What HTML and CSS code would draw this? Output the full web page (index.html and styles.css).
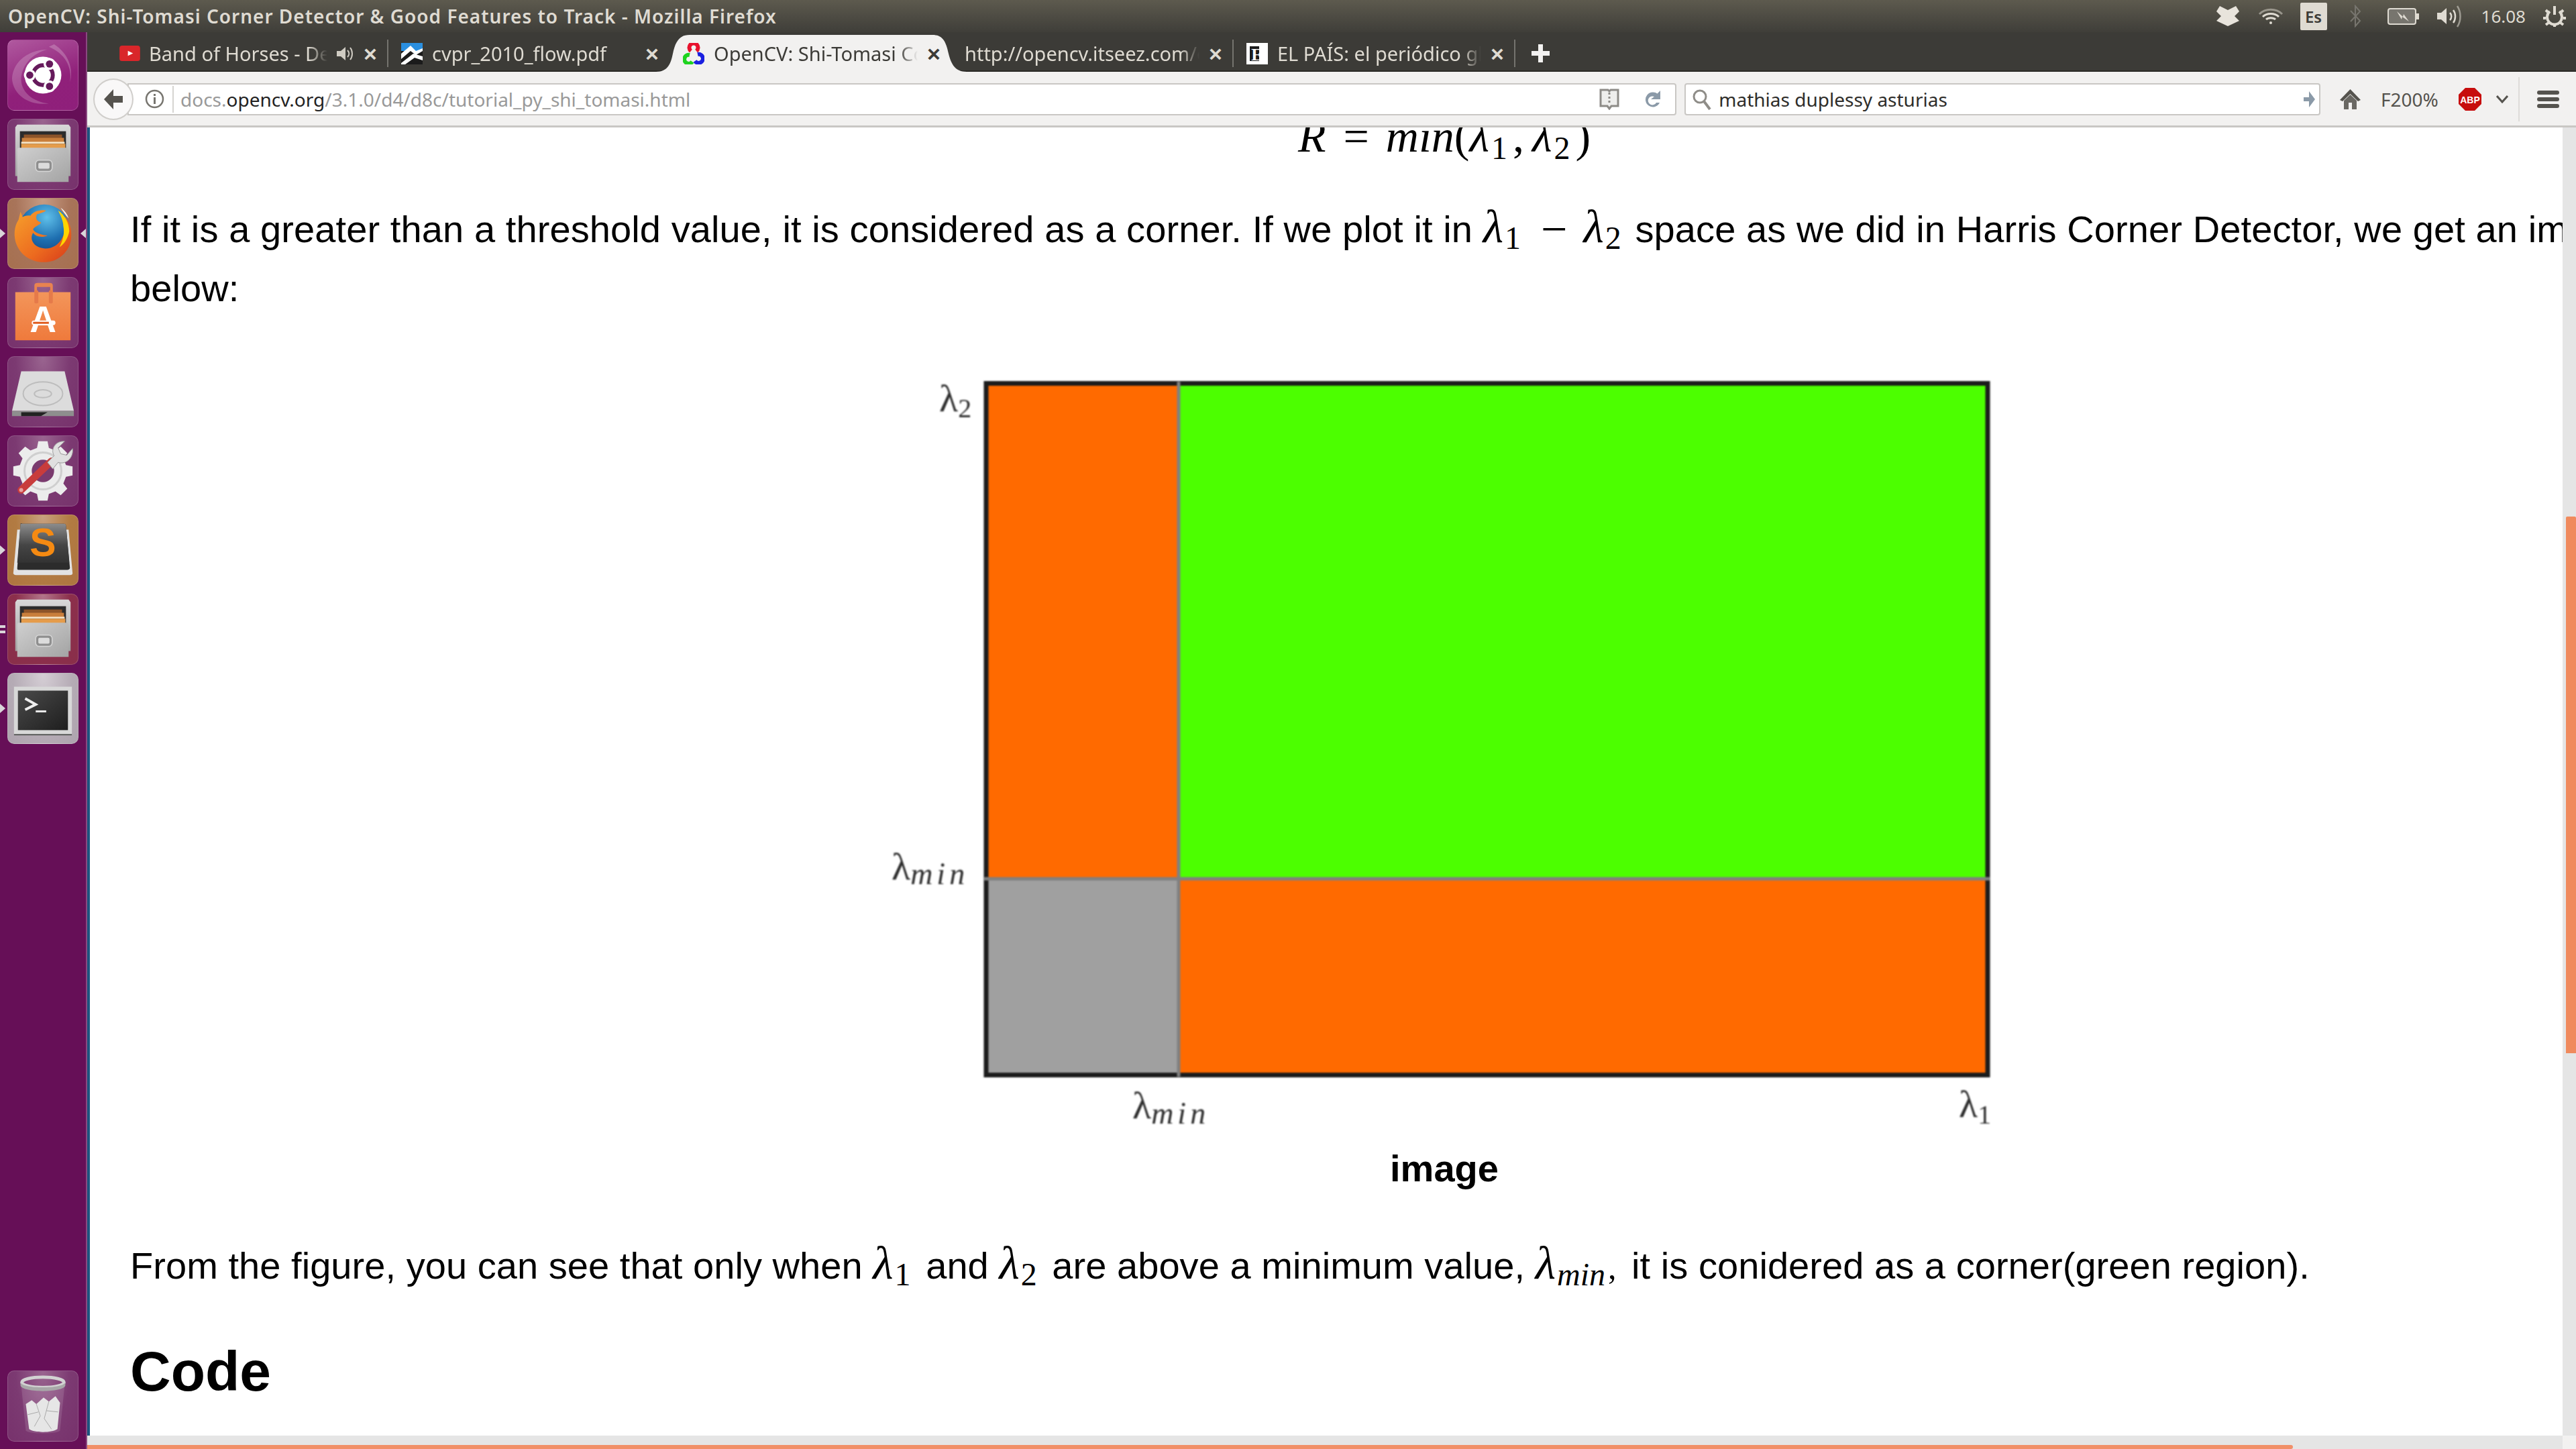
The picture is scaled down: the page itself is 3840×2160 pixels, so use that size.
FILE: index.html
```html
<!DOCTYPE html>
<html lang="en">
<head>
    <meta charset="UTF-8">
    <title>OpenCV: Shi-Tomasi Corner Detector &amp; Good Features to Track - Mozilla Firefox</title>
    <link rel="stylesheet" href="styles.css">
</head>
<body>
    <svg class="svg-defs" aria-hidden="true">
        <defs>
            <linearGradient id="steel" x1="0" y1="0" x2="0" y2="1"><stop offset="0" stop-color="#d8d8d8"/><stop offset="1" stop-color="#a2a2a2"/></linearGradient>
            <linearGradient id="drawer" x1="0" y1="0" x2="1" y2="1"><stop offset="0" stop-color="#cfcfcf"/><stop offset="1" stop-color="#a4a4a4"/></linearGradient>
            <linearGradient id="bag" x1="0" y1="0" x2="0" y2="1"><stop offset="0" stop-color="#f3955a"/><stop offset="1" stop-color="#ef7a3c"/></linearGradient>
            <linearGradient id="key" x1="0" y1="0" x2="0" y2="1"><stop offset="0" stop-color="#8c8c8c"/><stop offset=".55" stop-color="#454545"/><stop offset="1" stop-color="#333"/></linearGradient>
            <linearGradient id="screen" x1="0" y1="0" x2="1" y2="1"><stop offset="0" stop-color="#4a4a4a"/><stop offset="1" stop-color="#1e1e1e"/></linearGradient>
            <radialGradient id="globe" cx=".55" cy=".25" r=".8"><stop offset="0" stop-color="#5fc0ea"/><stop offset=".55" stop-color="#1e6fb0"/><stop offset="1" stop-color="#123f7c"/></radialGradient>
            <linearGradient id="fox" x1="0" y1="0" x2="1" y2="1"><stop offset="0" stop-color="#f7a12c"/><stop offset=".6" stop-color="#ec6a1f"/><stop offset="1" stop-color="#d6391a"/></linearGradient>
            <symbol id="cabinet" viewBox="0 0 106 106">
                <path d="M14 8H92L95 12V86H11V12Z" fill="url(#steel)"/>
                <rect x="18" y="18" width="70" height="30" fill="#2c2c2c"/>
                <rect x="24" y="23" width="58" height="6" fill="#8d5429"/>
                <rect x="21" y="28" width="64" height="7" fill="#c97f3c"/>
                <rect x="20" y="34" width="66" height="3" fill="#f4e3c6"/>
                <rect x="20" y="37" width="67" height="9" fill="#e59c4b"/>
                <path d="M15 43H90L92 46V95H14V46Z" fill="url(#drawer)"/>
                <rect x="42" y="62" width="25" height="17" rx="5" fill="#8f8f8f" stroke="#d6d6d6" stroke-width="1.5"/>
                <rect x="46" y="66" width="17" height="9" rx="2" fill="#dcdcdc"/>
            </symbol>
        </defs>
    </svg>

    <header class="panel">
        <div class="panel-title">OpenCV: Shi-Tomasi Corner Detector &amp; Good Features to Track - Mozilla Firefox</div>
        <div class="tray">
            <svg class="tray-icon tray-dropbox" viewBox="0 0 34 30"><path d="M5 0L17 6L29 0L34 8L27 15L34 22L17 30L0 22L7 15L0 8Z" fill="#e8e4dc"/></svg>
            <svg class="tray-icon tray-wifi" viewBox="0 0 38 25" fill="none" stroke="#dfdbd2" stroke-width="3"><path d="M2 9C11 0 27 0 36 9" opacity=".5"/><path d="M7 13C13 7 25 7 31 13"/><path d="M12 17C15 14 23 14 26 17"/><circle cx="19" cy="22" r="2" fill="#dfdbd2" stroke="none"/></svg>
            <div class="tray-lang">Es</div>
            <svg class="tray-icon tray-bt" viewBox="0 0 20 34" fill="none" stroke="#77756e" stroke-width="2"><path d="M3 9L17 24L10 32V2L17 10L3 25"/></svg>
            <svg class="tray-icon tray-battery" viewBox="0 0 48 25"><rect x="1" y="1" width="41" height="23" rx="3" fill="#77756e" stroke="#dfdbd2" stroke-width="2"/><rect x="43" y="8" width="4" height="9" fill="#dfdbd2"/><path d="M14 5L23 13L24 9L32 20L22 13L21 17Z" fill="#dfdbd2"/></svg>
            <svg class="tray-icon tray-vol" viewBox="0 0 38 34" fill="none" stroke="#dfdbd2" stroke-width="2.5"><path d="M1 12H7L15 5V29L7 22H1Z" fill="#dfdbd2" stroke="none"/><path d="M20 12C23 15 23 20 20 23"/><path d="M25 8C29 13 29 22 25 27"/><path d="M31 2C37 11 37 24 31 33" opacity=".55"/></svg>
            <div class="tray-clock">16.08</div>
            <svg class="tray-icon tray-gear" viewBox="0 0 36 32" fill="none" stroke="#dfdbd2"><path d="M11 9A11 11 0 1 0 25 9" stroke-width="4"/><path d="M18 1V14" stroke-width="4"/><path d="M5 7L8 10M31 7L28 10M1 19H5M31 19H35M5 29L9 26M31 29L27 26M18 28V32" stroke-width="4"/></svg>
        </div>
    </header>

    <div class="desktop">
        <nav class="launcher">
            <div class="tile tile-dash">
                <svg viewBox="0 0 106 106">
                    <path d="M6 58C8 30 34 14 60 14C44 18 24 30 20 56C18 78 38 94 62 96C36 100 8 86 6 58Z" fill="#fff" opacity=".2"/>
                    <path d="M70 6C92 20 100 44 94 64C98 40 86 20 62 10Z" fill="#fff" opacity=".22"/>
                    <circle cx="53" cy="53" r="28" fill="#fff"/>
                    <circle cx="53" cy="53" r="15" fill="none" stroke="#661a5c" stroke-width="6"/>
                    <circle cx="33" cy="53" r="9" fill="#fff"/><circle cx="63" cy="36" r="9" fill="#fff"/><circle cx="63" cy="70" r="9" fill="#fff"/>
                    <circle cx="33" cy="53" r="5.5" fill="#661a5c"/><circle cx="63" cy="36" r="5.5" fill="#661a5c"/><circle cx="63" cy="70" r="5.5" fill="#661a5c"/>
                </svg>
            </div>
            <div class="tile"><svg viewBox="0 0 106 106"><use href="#cabinet"/></svg></div>
            <div class="tile tile-firefox pip-left pip-right">
                <svg viewBox="0 0 106 106">
                    <circle cx="55" cy="48" r="39" fill="url(#globe)"/>
                    <path d="M19 20L16 32C9 42 8 58 13 70C21 90 42 99 62 96C80 93 95 78 96 58C97 46 93 34 86 27C90 40 88 50 83 58C76 74 60 79 47 74C37 70 33 60 38 52C42 58 52 60 60 56C52 56 40 52 38 47C40 42 50 40 50 36C44 35 41 30 44 24C50 22 54 21 58 18C48 16 38 20 34 26C29 25 24 27 22 28C21 25 20 23 19 20Z" fill="url(#fox)"/>
                    <path d="M76 18C86 24 93 38 93 50C91 60 85 70 78 74C84 62 86 52 84 42C84 34 80 26 76 18Z" fill="#ffd400"/>
                    <path d="M80 14C86 18 90 24 92 30C88 26 84 20 80 14Z" fill="#fff" opacity=".9"/>
                </svg>
            </div>
            <div class="tile">
                <svg viewBox="0 0 106 106">
                    <path d="M40 28V12C40 9 42 8 45 8H63C66 8 68 9 68 12V28H64V14H44V28Z" fill="#e98350"/>
                    <path d="M11 22H95V95H11Z" fill="url(#bag)"/>
                    <rect x="40" y="19" width="6" height="20" rx="2" fill="#e57a4a"/><rect x="62" y="19" width="6" height="20" rx="2" fill="#e57a4a"/>
                    <text class="bag-letter" x="53" y="83" text-anchor="middle">A</text>
                    <rect x="36" y="65" width="36" height="7" rx="3.5" fill="#fff"/><rect x="38" y="67" width="24" height="3" fill="#e05a1c"/>
                </svg>
            </div>
            <div class="tile">
                <svg viewBox="0 0 106 106">
                    <path d="M20 22H86L100 82H6Z" fill="#dcdcdc"/>
                    <path d="M6 82H100V90H6Z" fill="#8e8e8e"/>
                    <path d="M20 84H60L50 90H20Z" fill="#222"/>
                    <ellipse cx="53" cy="56" rx="30" ry="18" fill="none" stroke="#bdbdbd" stroke-width="2"/>
                    <ellipse cx="53" cy="56" rx="13" ry="6" fill="none" stroke="#bdbdbd" stroke-width="2"/>
                </svg>
            </div>
            <div class="tile">
                <svg viewBox="0 0 106 106">
                    <path d="M46 8H60L62 18L72 22L80 16L90 26L84 34L88 44L98 46V60L88 62L84 72L90 80L80 90L72 84L62 88L60 98H46L44 88L34 84L26 90L16 80L22 72L18 62L8 60V46L18 44L22 34L16 26L26 16L34 22L44 18Z" fill="#ececec"/>
                    <circle cx="53" cy="53" r="28" fill="none" stroke="#cfcfcf" stroke-width="3"/>
                    <circle cx="53" cy="53" r="17" fill="#7a3a6e"/>
                    <path d="M20 82L66 38" stroke="#c83c3c" stroke-width="11" stroke-linecap="round"/>
                    <circle cx="20" cy="82" r="3" fill="#e8a0a0"/>
                    <path d="M60 40L70 30C64 20 72 7 86 8L76 18L80 27L89 29L98 19C100 33 88 44 76 40L68 50Z" fill="#e0e0e0" stroke="#9a9a9a"/>
                </svg>
            </div>
            <div class="tile tile-sublime pip-left">
                <svg viewBox="0 0 106 106">
                    <path d="M14 22L8 88C8 90 10 91 12 91H94C97 91 98 90 98 88L92 22Z" fill="#e2e2e2"/>
                    <path d="M19 13C19 11 21 13 23 13H85C87 13 88 14 88 16L94 80C94 82 92 83 90 83H16C14 83 14 82 14 80Z" fill="#2c2c2c"/>
                    <path d="M19 13H85C87 13 88 14 88 16L93 72H14Z" fill="url(#key)"/>
                    <text class="sublime-letter" x="53" y="62" text-anchor="middle">S</text>
                </svg>
            </div>
            <div class="tile tile-files pip-double"><svg viewBox="0 0 106 106"><use href="#cabinet"/></svg></div>
            <div class="tile tile-term pip-left">
                <svg viewBox="0 0 106 106">
                    <rect x="9" y="20" width="88" height="74" fill="#d8d8d8"/>
                    <rect x="9" y="92" width="88" height="2" fill="#555"/>
                    <rect x="15" y="26" width="76" height="60" fill="url(#screen)"/>
                    <path d="M26 38L42 47L26 55" fill="none" stroke="#eee" stroke-width="4"/>
                    <rect x="42" y="56" width="16" height="3" fill="#eee"/>
                </svg>
            </div>
            <div class="tile tile-trash">
                <svg viewBox="0 0 106 106">
                    <path d="M20 22L27 90C29 96 77 96 79 90L86 22Z" fill="#fff" opacity=".12"/>
                    <path d="M27 50L36 44L43 50L54 40L62 46L72 38L79 48L75 88C66 94 40 94 32 88Z" fill="#e6e6e6"/>
                    <path d="M43 50L49 68L40 84M62 46L55 72L66 88M30 66L46 62M76 62L58 60" fill="none" stroke="#a8a8a8"/>
                    <ellipse cx="53" cy="17" rx="32" ry="8" fill="none" stroke="#d2d2d2" stroke-width="5"/>
                    <path d="M19 17V22C22 33 84 33 87 22V17C84 27 22 27 19 17Z" fill="#a8a8a8"/>
                </svg>
            </div>
        </nav>

        <div class="browser">
            <div class="tabbar">
                <div class="tab tab-sep">
                    <svg class="favicon" viewBox="0 0 32 24"><rect width="32" height="24" rx="4" fill="#d9262a"/><path d="M13 8L21 12L13 16Z" fill="#fff"/></svg>
                    <span class="tab-title">Band of Horses - Detlef</span>
                    <svg class="tab-sound" viewBox="0 0 26 26" fill="#cfcbc2"><path d="M1 9H7L14 3V23L7 17H1Z"/><path d="M17 8C20 11 20 15 17 18M21 4C25 9 25 17 21 22" fill="none" stroke="#cfcbc2" stroke-width="2"/></svg>
                    <span class="tab-close">×</span>
                </div>
                <div class="tab">
                    <svg class="favicon favicon-tall" viewBox="0 0 32 32"><rect width="32" height="32" fill="#1b1b1b"/><rect width="32" height="12" fill="#2a8fe0"/><path d="M0 16L14 4L22 12L32 8V12L22 18L14 12L0 24ZM0 30L18 16L32 20V26L20 22L6 32H0Z" fill="#fff"/></svg>
                    <span class="tab-title">cvpr_2010_flow.pdf</span>
                    <span class="tab-close">×</span>
                </div>
                <div class="tab tab-active">
                    <svg class="tab-shape" viewBox="0 0 463 55" preserveAspectRatio="none"><path d="M0 55C18 55 22 42 25 28C29 8 36 0 50 0H412C426 0 432 8 436 28C440 44 446 55 463 55Z" fill="#f2f1f0"/></svg>
                    <svg class="favicon favicon-tall" viewBox="0 0 30 32" fill="none" stroke-width="6"><path d="M11 12A6.5 6.5 0 1 1 19 12" stroke="#e8112d"/><path d="M9 18A6.5 6.5 0 1 0 13 28" stroke="#1fd31f"/><path d="M21 17A6.5 6.5 0 1 1 17 27" stroke="#1a1fe0"/></svg>
                    <span class="tab-title">OpenCV: Shi-Tomasi Corner Detector</span>
                    <span class="tab-close">×</span>
                </div>
                <div class="tab tab-sep">
                    <span class="tab-title">http://opencv.itseez.com/doc/tutorials</span>
                    <span class="tab-close">×</span>
                </div>
                <div class="tab tab-sep">
                    <svg class="favicon favicon-tall" viewBox="0 0 32 32"><rect width="32" height="32" fill="#fff"/><rect x="5" y="5" width="14" height="22" fill="#1c1c1c"/><text class="elpais-letter" x="16" y="26" text-anchor="middle">E</text></svg>
                    <span class="tab-title">EL PAÍS: el periódico global</span>
                    <span class="tab-close">×</span>
                </div>
                <svg class="new-tab" viewBox="0 0 27 27"><path d="M10 0H17V10H27V17H17V27H10V17H0V10H10Z" fill="#f2f1f0"/></svg>
            </div>

            <div class="toolbar">
                <button class="back-btn" type="button">
                    <svg viewBox="0 0 28 30"><path d="M14 0L0 15L14 30V20H28V10H14Z" fill="#55534e"/></svg>
                </button>
                <div class="urlbar">
                    <svg class="url-info" viewBox="0 0 29 29" fill="none" stroke="#77756f" stroke-width="2.5"><circle cx="14.5" cy="14.5" r="12.5"/><path d="M14.5 12V22M14.5 7V10" stroke-width="3"/></svg>
                    <span class="url-text">docs.<b>opencv.org</b>/3.1.0/d4/d8c/tutorial_py_shi_tomasi.html</span>
                    <svg class="url-reader" viewBox="0 0 30 32" fill="none" stroke="#8d8b87" stroke-width="3"><path d="M2 2H13L15 4L17 2H28V26H18L15 30L12 26H2Z" fill="#eeeeec"/><path d="M15 6V24" stroke-dasharray="3 3"/></svg>
                    <svg class="url-reload" viewBox="0 0 24 30"><path d="M21 8A11 11 0 1 0 23 20H18A6.5 6.5 0 1 1 15 11L10 15H24V2L19 7Z" fill="#8b9aa8"/></svg>
                </div>
                <div class="searchbar">
                    <svg class="search-icon" viewBox="0 0 28 32" fill="none" stroke="#8f8d88" stroke-width="3"><circle cx="11" cy="12" r="9"/><path d="M17 19L26 31" stroke-width="4"/></svg>
                    <span class="search-text">mathias duplessy asturias</span>
                    <svg class="search-go" viewBox="0 0 17 24"><path d="M8 0L17 12L8 24V15H0V9H8Z" fill="#8b9aa8"/></svg>
                </div>
                <svg class="home-icon" viewBox="0 0 31 30"><path d="M15.5 0L31 16L27 18L15.5 7L4 18L0 16Z" fill="#55534e"/><path d="M6 17L15.5 8L25 17V30H18V20H13V30H6Z" fill="#6a6863"/></svg>
                <span class="zoom-level">F200%</span>
                <svg class="abp-icon" viewBox="0 0 34 34"><path d="M10 0H24L34 10V24L24 34H10L0 24V10Z" fill="#c70d0d"/><text class="abp-text" x="17" y="22.5" text-anchor="middle">ABP</text></svg>
                <svg class="abp-menu" viewBox="0 0 18 12" fill="none" stroke="#55534e" stroke-width="3"><path d="M1 1L9 10L17 1"/></svg>
                <div class="toolbar-sep"></div>
                <div class="hamburger"><span></span><span></span><span></span></div>
            </div>

            <div class="viewport">
                <main class="page">
                    <div class="content">
                        <div class="equation"><i>R</i><span class="eq-op">=</span><i>min</i>(<i>λ</i><sub>1</sub><span class="eq-comma">,</span><i>λ</i><sub class="eq-last">2</sub>)</div>
                        <p class="intro">If it is a greater than a threshold value, it is considered as a corner. If we plot it in <span class="math"><i>λ</i><sub>1</sub><span class="math-op">−</span><i>λ</i><sub>2</sub></span> space as we did in Harris Corner Detector, we get an image as below:</p>
                        <figure class="region-fig">
                            <svg class="region-plot" viewBox="0 0 1686 1158">
                                <g class="region-fill">
                                    <rect x="160" y="32" width="287" height="738" fill="#ff6a00"/>
                                    <rect x="447" y="32" width="1206" height="738" fill="#4cff00"/>
                                    <rect x="160" y="770" width="287" height="292" fill="#a0a0a0"/>
                                    <rect x="447" y="770" width="1206" height="292" fill="#ff6a00"/>
                                    <rect x="160" y="31.5" width="1493" height="1031" fill="none" stroke="#1c1c1c" stroke-width="7"/>
                                    <path d="M447 29V1065M157 770H1656" fill="none" stroke="#808080" stroke-width="5"/>
                                </g>
                                <g class="region-labels">
                                    <text x="90" y="73">λ<tspan class="lab-sub" dy="9">2</tspan></text>
                                    <text x="19" y="771">λ<tspan class="lab-sub lab-it" dy="7">min</tspan></text>
                                    <text x="378" y="1127">λ<tspan class="lab-sub lab-it" dy="8">min</tspan></text>
                                    <text x="1610" y="1125">λ<tspan class="lab-sub" dy="10">1</tspan></text>
                                </g>
                            </svg>
                            <figcaption>image</figcaption>
                        </figure>
                        <p class="after-fig">From the figure, you can see that only when <span class="math"><i>λ</i><sub>1</sub></span> and <span class="math"><i>λ</i><sub>2</sub></span> are above a minimum value, <span class="math"><i>λ</i><sub><i>min</i></sub><span class="math-comma">,</span></span> it is conidered as a corner(green region).</p>
                        <h2>Code</h2>
                    </div>
                </main>
                <div class="vscroll"><div class="vthumb"></div></div>
            </div>

            <div class="hscroll">
                <div class="htrack"><div class="hthumb"></div></div>
                <div class="scroll-corner"></div>
            </div>
        </div>
    </div>
</body>
</html>
```

FILE: styles.css
```css
html, body { margin: 0; padding: 0; }
body {
    width: 3840px;
    height: 2160px;
    overflow: hidden;
    display: flex;
    flex-direction: column;
    font-family: "Liberation Sans", Arial, sans-serif;
    background: #fff;
}
svg { display: block; }
.svg-defs { position: absolute; width: 0; height: 0; }

/* top panel */
.panel {
    height: 48px;
    flex: none;
    display: flex;
    align-items: center;
    justify-content: space-between;
    padding: 0 14px 0 12px;
    background: linear-gradient(#5d5a4e, #3f3e39);
    color: #dfdbd2;
    font-family: "Noto Sans", sans-serif;
}
.panel-title { font-size: 28px; font-weight: 600; letter-spacing: 1px; white-space: nowrap; }
.tray { display: flex; align-items: center; gap: 25px; }
.tray-dropbox { width: 34px; height: 30px; }
.tray-wifi { width: 38px; height: 25px; margin-left: 3px; }
.tray-lang {
    width: 40px;
    height: 41px;
    background: #dfdbd2;
    color: #3c3b37;
    border-radius: 2px;
    font-size: 24px;
    font-weight: 600;
    line-height: 41px;
    text-align: center;
}
.tray-bt { width: 20px; height: 34px; margin-left: 7px; }
.tray-battery { width: 48px; height: 25px; margin-left: 13px; }
.tray-vol { width: 38px; height: 34px; }
.tray-clock { font-size: 26px; margin-left: 4px; }
.tray-gear { width: 36px; height: 32px; }

/* launcher */
.desktop { flex: 1; display: flex; min-height: 0; }
.launcher {
    width: 128px;
    flex: none;
    box-sizing: content-box;
    border-right: 2px solid #8a4a80;
    background: #660f57;
    display: flex;
    flex-direction: column;
    gap: 12px;
    padding: 11px 0 11px;
    align-items: center;
    height: 2090px;
}
.tile {
    position: relative;
    width: 106px;
    height: 106px;
    flex: none;
    box-sizing: border-box;
    border-radius: 10px;
    border: 1px solid rgba(255, 255, 255, 0.16);
    background: radial-gradient(ellipse at 50% 0, #9a6590, #7c3a72 55%, #77326c);
}
.tile svg { width: 104px; height: 104px; }
.tile-dash { background: linear-gradient(160deg, #b0599f, #90207a 60%, #8f1f7b); }
.tile-firefox { background: radial-gradient(ellipse at 50% 0, #c79c84, #a8745a 55%, #a6704f); }
.tile-sublime { background: radial-gradient(ellipse at 50% 0, #c8a180, #b27b42 55%, #ae7540); }
.tile-files { background: radial-gradient(ellipse at 50% 0, #b3768b, #8c2f4c 55%, #892f4a); }
.tile-term { background: radial-gradient(ellipse at 50% 0, #d5ced5, #b5abb5 60%, #aea4ae); }
.tile-trash { margin-top: auto; }

/* launcher pips */
.pip-left::before, .pip-double::before, .pip-right::after {
    content: "";
    position: absolute;
    top: 50%;
    margin-top: -7px;
    border: 7px solid transparent;
}
.pip-left::before { left: -12px; border-left: 8px solid #d9d5d9; }
.pip-right::after { right: -12px; border-right: 8px solid #d9d5d9; }
.pip-double::before {
    left: -12px;
    margin-top: -6px;
    width: 8px;
    height: 4px;
    border: 0;
    background: #d9d5d9;
    box-shadow: 0 8px 0 #d9d5d9;
}

/* browser chrome */
.browser { flex: 1; min-width: 0; display: flex; flex-direction: column; }
.tabbar {
    height: 59px;
    flex: none;
    box-sizing: border-box;
    display: flex;
    align-items: flex-end;
    padding-left: 29px;
    background: #3c3b37;
    border-bottom: 2px solid #2a2926;
    color: #dfdbd2;
    font-family: "Noto Sans", sans-serif;
    font-size: 29px;
}
.tab {
    position: relative;
    width: 420px;
    height: 55px;
    margin-bottom: -2px;
    flex: none;
    box-sizing: border-box;
    display: flex;
    align-items: center;
    padding: 0 21px 0 19px;
}
.tab-sep::after {
    content: "";
    position: absolute;
    right: 0;
    top: 7px;
    height: 41px;
    width: 2px;
    background: #75736e;
}
.tab-active { color: #3c3b37; }
.tab-shape { position: absolute; left: -21px; top: 0; width: 463px; height: 55px; }
.favicon { position: relative; width: 31px; height: 23px; margin-right: 13px; flex: none; }
.favicon-tall { width: 32px; height: 32px; margin-right: 14px; }
.tab-title {
    position: relative;
    flex: 1;
    min-width: 0;
    overflow: hidden;
    white-space: nowrap;
    -webkit-mask-image: linear-gradient(to left, transparent, #000 28px);
    mask-image: linear-gradient(to left, transparent, #000 28px);
}
.tab-sound { width: 26px; height: 26px; margin: 0 15px 0 13px; flex: none; }
.tab-close { position: relative; width: 16px; margin-left: 14px; font: bold 34px/1 "Liberation Sans", sans-serif; text-align: center; flex: none; }
.tab-sound + .tab-close { margin-left: 0; }
.new-tab { width: 27px; height: 27px; margin: 0 0 12px 24px; }

.toolbar {
    height: 83px;
    flex: none;
    box-sizing: border-box;
    display: flex;
    align-items: center;
    padding: 1px 25px 0 9px;
    background: #f2f1f0;
    border-bottom: 3px solid #c9c7c4;
    color: #55534e;
    font-family: "Noto Sans", sans-serif;
    font-size: 28px;
}
.back-btn {
    position: relative;
    width: 60px;
    height: 62px;
    flex: none;
    padding: 0;
    display: flex;
    align-items: center;
    justify-content: center;
    border: 2px solid #d0cecb;
    border-radius: 50%;
    background: #f9f8f8;
    z-index: 1;
}
.back-btn svg { width: 28px; height: 30px; }
.urlbar, .searchbar {
    height: 48px;
    box-sizing: border-box;
    display: flex;
    align-items: center;
    background: #fff;
    border: 2px solid #c9c7c4;
    border-radius: 0 4px 4px 0;
}
.urlbar { width: 2310px; margin-left: -9px; padding: 0 22px 0 24px; }
.url-info { width: 29px; height: 29px; flex: none; }
.url-text {
    flex: 1;
    margin-left: 12px;
    padding-left: 10px;
    border-left: 2px solid #d6d4d1;
    line-height: 40px;
    color: #999;
    white-space: nowrap;
}
.url-text b { font-weight: 400; color: #222; }
.url-reader { width: 30px; height: 32px; }
.url-reload { width: 24px; height: 30px; margin-left: 37px; }
.searchbar { width: 948px; margin-left: 12px; padding: 0 6px 0 10px; border-radius: 4px; }
.search-icon { width: 28px; height: 32px; flex: none; }
.search-text { flex: 1; margin-left: 11px; color: #2e2d2a; white-space: nowrap; }
.search-go { width: 17px; height: 24px; }
.home-icon { width: 31px; height: 30px; margin-left: 29px; flex: none; }
.zoom-level { margin-left: 30px; width: 90px; white-space: nowrap; }
.abp-icon { width: 34px; height: 34px; margin-left: 26px; flex: none; }
.abp-menu { width: 18px; height: 12px; margin-left: 22px; flex: none; }
.toolbar-sep { width: 2px; height: 66px; margin-left: 15px; background: #dedcd9; flex: none; }
.hamburger { display: flex; flex-direction: column; gap: 4px; margin-left: 26px; }
.hamburger span { display: block; width: 33px; height: 6px; border-radius: 3px; background: #55534e; }

/* page */
.viewport { flex: 1; min-height: 0; display: flex; }
.page {
    flex: 1;
    min-width: 0;
    overflow: hidden;
    background: #fff;
    border-left: 4px solid #1d5580;
    color: #000;
}
.content { width: 3918px; margin: 0 0 0 60px; font-size: 56px; line-height: 88px; }
.equation {
    height: 90px;
    margin-top: -32px;
    text-align: center;
    font-family: "Liberation Serif", serif;
    font-size: 68px;
    line-height: 90px;
    white-space: nowrap;
}
.equation sub { font-size: 48px; line-height: 0; vertical-align: -11px; margin-left: 3px; }
.eq-op { margin: 0 25px 0 26px; }
.eq-comma { margin: 0 12px 0 8px; }
.eq-last { margin-right: 8px; }
.content p { margin: 0; }
.equation + p { margin-top: 50px; }
.intro { letter-spacing: 0.1px; }
.intro .math { margin-right: 5px; }
.math { font-family: "Liberation Serif", serif; font-size: 70px; line-height: 0; margin-right: 7px; letter-spacing: 0; }
.math sub { font-size: 48px; line-height: 0; vertical-align: -10px; margin-left: 2px; }
.math-op { margin: 0 24px 0 30px; vertical-align: -4px; }
.math-comma { font-size: 50px; margin-left: 4px; }

.region-fig { margin: 66px 0 0; text-align: center; }
.region-plot { width: 1686px; height: 1158px; margin: 0 auto; }
.region-fill { filter: blur(1px); }
.region-labels { filter: blur(0.8px); font-family: "Liberation Serif", serif; font-size: 58px; fill: #2e2e2e; }
.lab-sub { font-size: 40px; }
.lab-it { font-style: italic; font-size: 46px; letter-spacing: 6px; }
figcaption { font-weight: bold; }
.content .after-fig { margin-top: 57px; letter-spacing: 0.05px; }
h2 { margin: 63px 0 0; font-size: 84px; line-height: 100px; font-weight: bold; }

/* letters inside launcher and toolbar icons */
.bag-letter { font: bold 56px "Liberation Sans", sans-serif; fill: #fff; }
.sublime-letter { font: bold 60px "Liberation Sans", sans-serif; fill: #f58a12; }
.elpais-letter { font: bold 26px "Liberation Serif", serif; fill: #fff; }
.abp-text { font: bold 14px "Liberation Sans", sans-serif; fill: #fff; }

/* scrollbars */
.vscroll { width: 20px; flex: none; background: #e5e5e5; display: flex; justify-content: flex-end; }
.vthumb { width: 15px; height: 800px; margin-top: 580px; background: #f08a5d; border-radius: 2px 2px 0 0; }
.hscroll { height: 20px; flex: none; display: flex; }
.htrack { flex: 1; background: #e5e5e5; padding-top: 14px; box-sizing: border-box; }
.hthumb { width: 3288px; height: 6px; background: #f18f68; border-radius: 0 3px 3px 0; }
.scroll-corner { width: 20px; background: #f2f1f0; }
```
